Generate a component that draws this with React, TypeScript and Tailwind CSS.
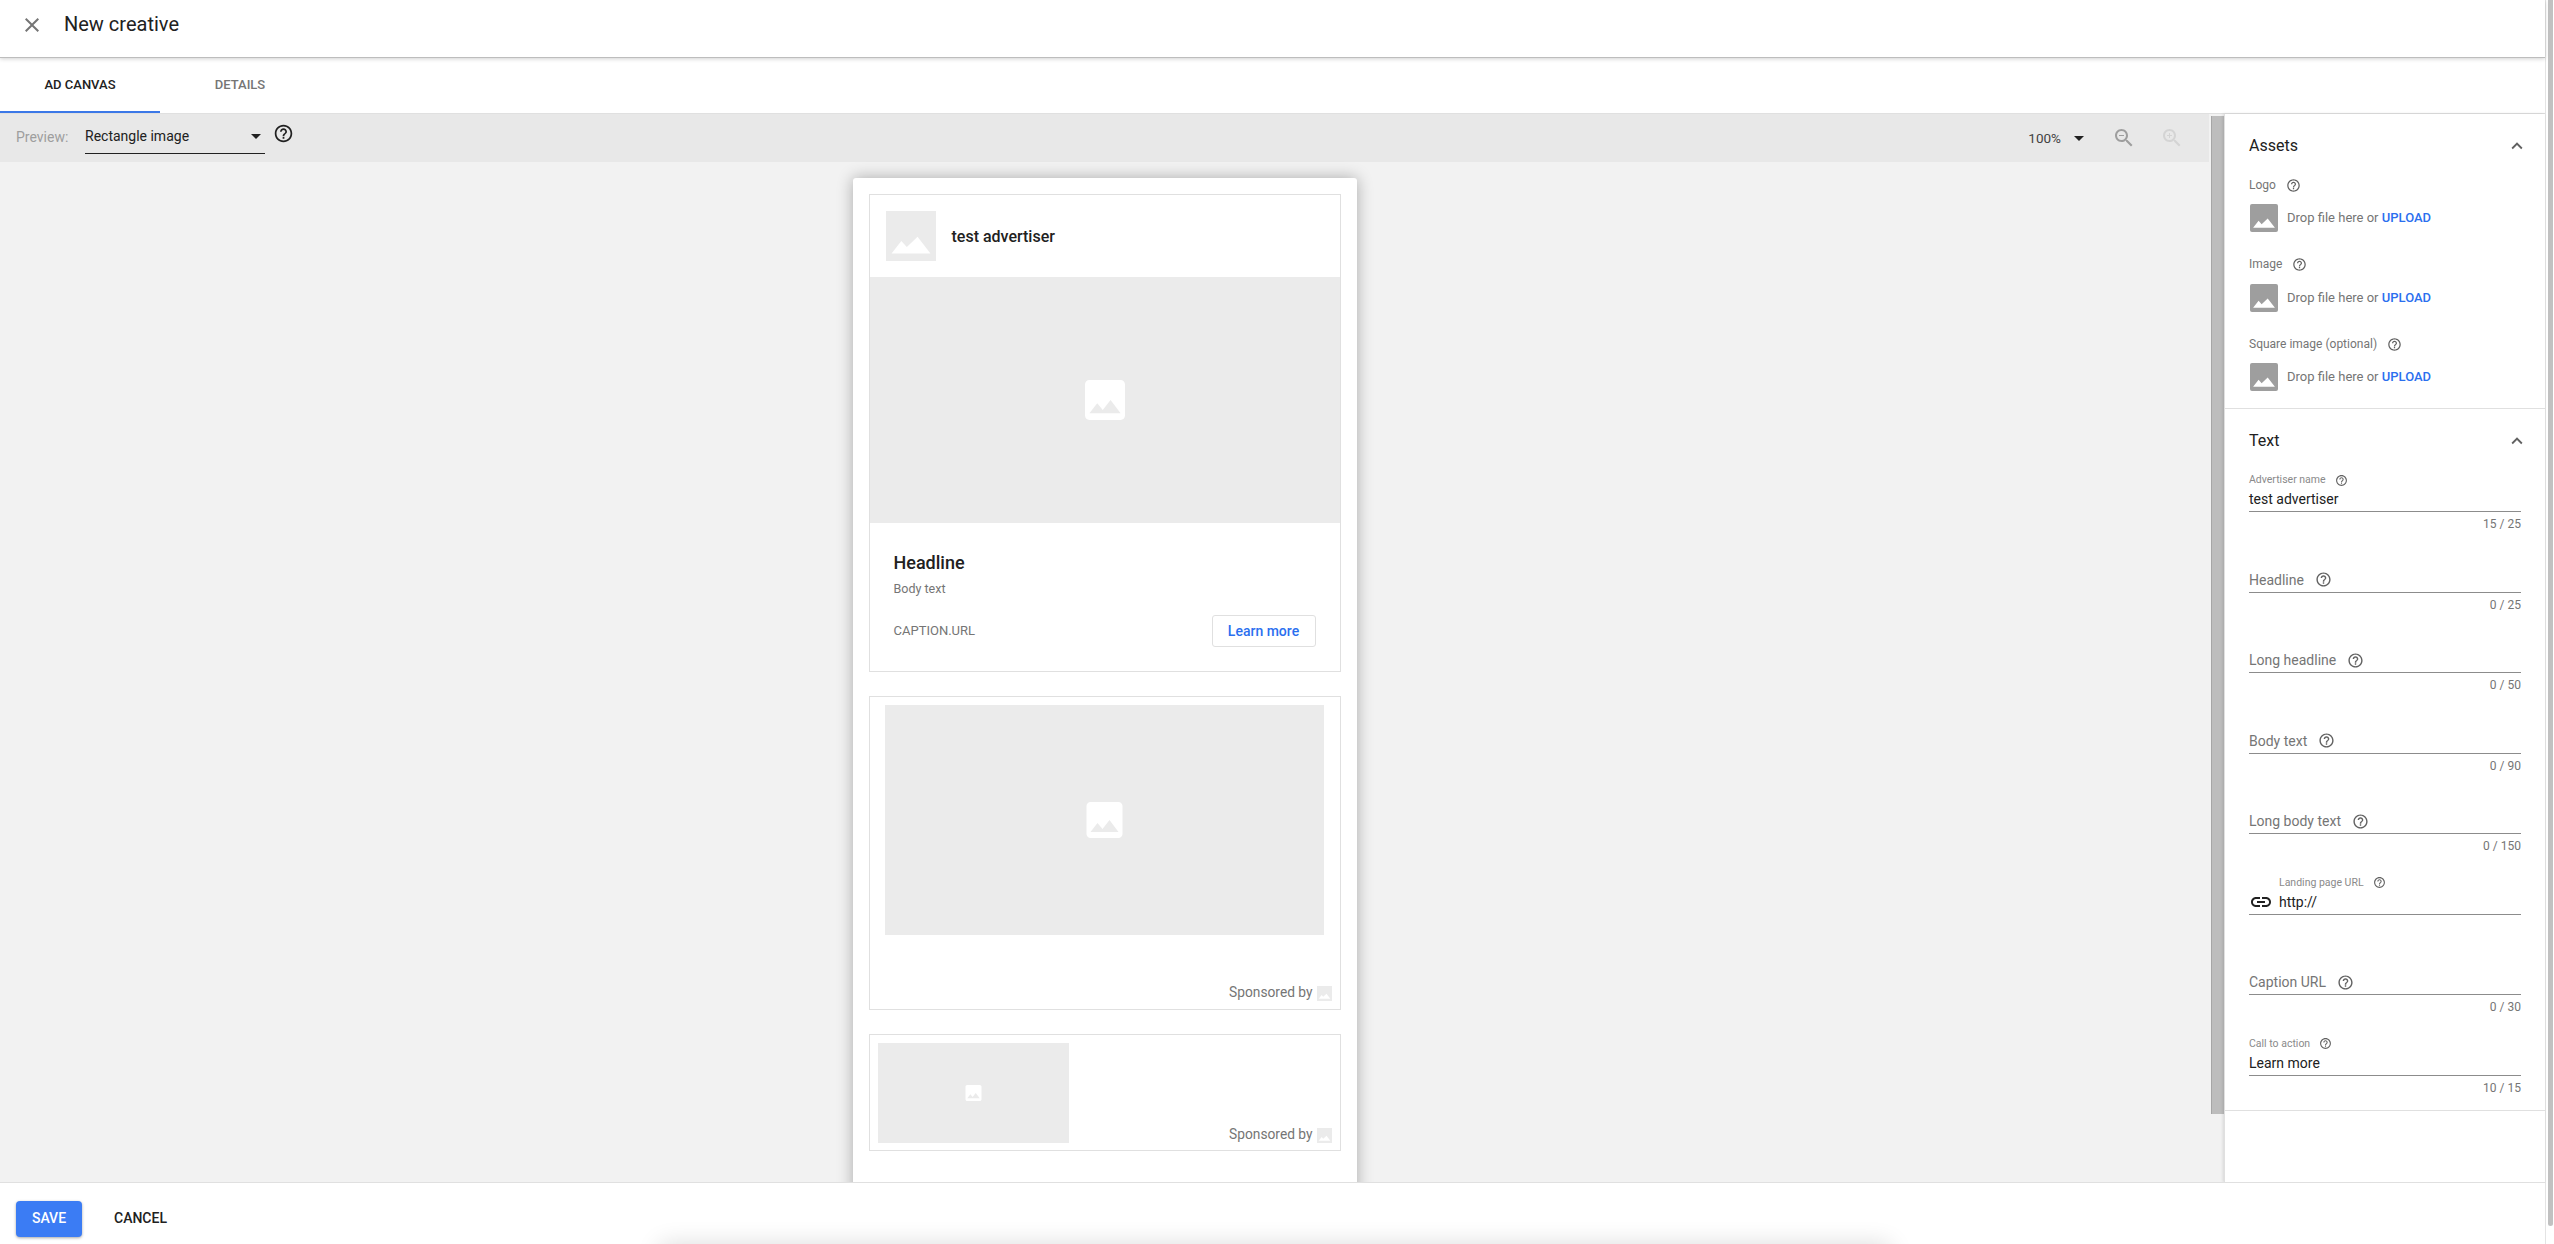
import React from "react";

const HELP = "M11 18h2v-2h-2v2zm1-16C6.48 2 2 6.48 2 12s4.48 10 10 10 10-4.48 10-10S17.52 2 12 2zm0 18c-4.41 0-8-3.59-8-8s3.59-8 8-8 8 3.59 8 8-3.59 8-8 8zm0-14c-2.21 0-4 1.79-4 4h2c0-1.1.9-2 2-2s2 .9 2 2c0 2-3 1.75-3 5h2c0-2.25 3-2.5 3-5 0-2.21-1.79-4-4-4z";
const MOUNTAINS = "M5.3 40.7 14.7 28.7 20 34.5 30.3 24.7 42.7 40.7Z";

function Help({ size, color = "#616161", className = "" }: { size: number; color?: string; className?: string }) {
  return (
    <svg width={size} height={size} viewBox="0 0 24 24" fill={color} className={`shrink-0 ${className}`}>
      <path d={HELP} />
    </svg>
  );
}

function Mountains({ className }: { className: string }) {
  return (
    <svg viewBox="0 0 48 48" fill="#ffffff" className={className}>
      <path d={MOUNTAINS} />
    </svg>
  );
}

function PlaceholderIcon({ w, h }: { w: number; h: number }) {
  return (
    <svg width={w} height={h} viewBox="3 3 18 18" fill="#ffffff">
      <path d="M21 19V5c0-1.1-.9-2-2-2H5c-1.1 0-2 .9-2 2v14c0 1.1.9 2 2 2h14c1.1 0 2-.9 2-2zM8.5 13.5l2.5 3.01L14.5 12l4.5 6H5l3.5-4.5z" />
    </svg>
  );
}

function Sponsored() {
  return (
    <div className="flex items-center justify-end h-[18px] text-[13.75px] leading-[18px] text-[#757575]">
      <span>Sponsored by</span>
      <div className="ml-[4px] mt-[3px] w-[15px] h-[15px] bg-[#ebebeb]">
        <Mountains className="w-[15px] h-[15px]" />
      </div>
    </div>
  );
}

function Caret() {
  return <div className="w-0 h-0 border-l-[5px] border-r-[5px] border-t-[5px] border-l-transparent border-r-transparent border-t-[#212121]" />;
}

function Upload({ label, gapTop, rowTop }: { label: string; gapTop: string; rowTop: string }) {
  return (
    <div>
      <div className={`flex items-center h-[16px] text-[12px] leading-[16px] text-[#757575] ${gapTop}`}>
        <span>{label}</span>
        <Help size={15} className="ml-[10px]" />
      </div>
      <div className={`flex items-center h-[28px] ${rowTop}`}>
        <div className="w-[28px] h-[28px] rounded-[2px] bg-[#9e9e9e] ml-[1px]">
          <Mountains className="w-[28px] h-[28px]" />
        </div>
        <span className="ml-[9px] text-[13px] text-[#757575] whitespace-nowrap">
          Drop file here or <span className="font-medium text-[#2b6fef]">UPLOAD</span>
        </span>
      </div>
    </div>
  );
}

function Field({ label, value, count, indent }: { label: string; value?: string; count?: string; indent?: boolean }) {
  return (
    <div className="h-[80.5px] flex flex-col">
      <div className="flex-1 flex flex-col justify-end border-b border-[#8c8c8c] pb-[2px]">
        {value ? (
          <>
            <div className={`flex items-center h-[14px] mb-[2px] text-[10.5px] leading-[14px] text-[#8a8a8a] ${indent ? "ml-[30px]" : ""}`}>
              <span>{label}</span>
              <Help size={13} className="ml-[9px]" />
            </div>
            <div className="flex items-center h-[20px] text-[14px] leading-[20px] text-[#212121]">
              {indent && (
                <svg width="24" height="24" viewBox="0 0 24 24" fill="#212121" className="mr-[6px] shrink-0">
                  <path d="M3.9 12c0-1.71 1.39-3.1 3.1-3.1h4V7H7c-2.76 0-5 2.24-5 5s2.24 5 5 5h4v-1.9H7c-1.71 0-3.1-1.39-3.1-3.1zM8 13h8v-2H8v2zm9-6h-4v1.9h4c1.71 0 3.1 1.39 3.1 3.1s-1.39 3.1-3.1 3.1h-4V17h4c2.76 0 5-2.24 5-5s-2.24-5-5-5z" />
                </svg>
              )}
              <span>{value}</span>
            </div>
          </>
        ) : (
          <div className="flex items-center h-[20px] text-[14px] leading-[20px] text-[#757575]">
            <span>{label}</span>
            <Help size={17} className="ml-[11px]" />
          </div>
        )}
      </div>
      <div className="h-[23px] pt-[3px] text-right text-[12px] leading-[18px] text-[#757575]">{count}</div>
    </div>
  );
}

function SectionTitle({ title }: { title: string }) {
  return (
    <div className="flex items-center justify-between pt-[22px] h-[42px]">
      <span className="text-[16px] leading-[20px] text-[#212121]">{title}</span>
      <svg width="22" height="22" viewBox="0 0 24 24" fill="#616161" className="-mr-[7px]">
        <path d="M12 8l-6 6 1.41 1.41L12 10.83l4.59 4.58L18 14z" />
      </svg>
    </div>
  );
}

export default function App() {
  return (
    <div className="relative flex h-[1244px] w-full overflow-hidden bg-white font-['Roboto',sans-serif]">
      <div className="flex flex-col w-[2546px] shrink-0 border-r border-[#e4e4e4]">
        <header className="relative z-10 flex items-center h-[58px] shrink-0 bg-white border-b border-[#bdbdbd] shadow-[0_1px_4px_rgba(0,0,0,0.18)]">
          <svg width="24" height="24" viewBox="0 0 24 24" fill="#757575" className="ml-[20px] mb-[8px]">
            <path d="M19 6.41L17.59 5 12 10.59 6.41 5 5 6.41 10.59 12 5 17.59 6.41 19 12 13.41 17.59 19 19 17.59 13.41 12z" />
          </svg>
          <h1 className="ml-[20px] mb-[10px] text-[20px] leading-[24px] font-normal text-[#212121]">New creative</h1>
        </header>

        <nav className="flex h-[56px] shrink-0 bg-white border-b border-[#e0e0e0] text-[13px] font-medium">
          <div className="w-[160px] h-[55px] flex items-center justify-center text-[#212121] border-b-[2px] border-[#3b78e7]">AD CANVAS</div>
          <div className="w-[160px] h-[55px] flex items-center justify-center text-[#757575] border-b-[2px] border-transparent">DETAILS</div>
        </nav>

        <main className="flex flex-1 min-h-0">
          <section className="relative w-[2224px] shrink-0 flex flex-col bg-[#f2f2f2] overflow-hidden">
            <div className="flex items-center w-[2209px] h-[48px] shrink-0 bg-[#e8e8e8] pl-[16px]">
              <span className="w-[53px] text-[14px] whitespace-nowrap text-[#9e9e9e] mb-[1px]">Preview:</span>
              <div className="ml-[16px] w-[180px] h-[40px] self-start flex items-center justify-between border-b border-[#212121] pt-[6px] pr-[4px] text-[14px] text-[#212121]">
                <span>Rectangle image</span>
                <Caret />
              </div>
              <Help size={21} color="#212121" className="ml-[8px] mb-[9px]" />
              <span className="ml-auto text-[13.5px] text-[#424242]">100%</span>
              <div className="ml-[13px]"><Caret /></div>
              <svg width="24" height="24" viewBox="0 0 24 24" fill="#9e9e9e" className="ml-[28px]">
                <path d="M15.5 14h-.79l-.28-.27C15.41 12.59 16 11.11 16 9.5 16 5.91 13.09 3 9.5 3S3 5.91 3 9.5 5.91 16 9.5 16c1.61 0 3.09-.59 4.23-1.57l.27.28v.79l5 4.99L20.49 19l-4.99-5zm-6 0C7.01 14 5 11.99 5 9.5S7.01 5 9.5 5 14 7.01 14 9.5 11.99 14 9.5 14zM7 9h5v1H7z" />
              </svg>
              <svg width="24" height="24" viewBox="0 0 24 24" fill="#d4d4d4" className="ml-[24px] mr-[25px]">
                <path d="M15.5 14h-.79l-.28-.27C15.41 12.59 16 11.11 16 9.5 16 5.91 13.09 3 9.5 3S3 5.91 3 9.5 5.91 16 9.5 16c1.61 0 3.09-.59 4.23-1.57l.27.28v.79l5 4.99L20.49 19l-4.99-5zm-6 0C7.01 14 5 11.99 5 9.5S7.01 5 9.5 5 14 7.01 14 9.5 11.99 14 9.5 14z" />
                <path d="M12 10h-2v2H9v-2H7V9h2V7h1v2h2v1z" />
              </svg>
            </div>

            <div className="flex justify-center w-[2209px] pt-[16px]">
              <div className="w-[504px] shrink-0 bg-white rounded-[3px] shadow-[0_0_16px_rgba(0,0,0,0.3)] px-[16px] pt-[16px] pb-[80px]">
                <div className="h-[478px] border border-[#e0e0e0]">
                  <div className="flex items-center h-[82px] pl-[16px]">
                    <div className="w-[50px] h-[50px] bg-[#ebebeb]">
                      <Mountains className="w-[50px] h-[50px]" />
                    </div>
                    <span className="ml-[16px] mt-[2px] text-[16px] font-medium text-[#212121]">test advertiser</span>
                  </div>
                  <div className="flex items-center justify-center h-[246px] bg-[#ebebeb]">
                    <PlaceholderIcon w={40} h={40} />
                  </div>
                  <div className="pl-[24px] pr-[24px]">
                    <div className="mt-[28px] text-[18px] leading-[24px] font-medium text-[#212121]">Headline</div>
                    <div className="mt-[5px] text-[12.5px] leading-[18px] text-[#757575]">Body text</div>
                    <div className="mt-[17px] flex items-center justify-between">
                      <span className="text-[13px] text-[#757575]">CAPTION.URL</span>
                      <div className="flex items-center justify-center w-[104px] h-[32px] rounded-[3px] border border-[#e0e0e0] text-[14px] font-medium text-[#2b6fef]">Learn more</div>
                    </div>
                  </div>
                </div>

                <div className="mt-[24px] h-[314px] border border-[#e0e0e0]">
                  <div className="ml-[15px] mt-[8px] w-[439px] h-[230px] bg-[#ebebeb] flex items-center justify-center">
                    <PlaceholderIcon w={37} h={36} />
                  </div>
                  <div className="mt-[48px] pr-[8px]">
                    <Sponsored />
                  </div>
                </div>

                <div className="mt-[24px] h-[117px] flex border border-[#e0e0e0]">
                  <div className="ml-[8px] mt-[8px] w-[191px] h-[100px] bg-[#ebebeb] flex items-center justify-center">
                    <PlaceholderIcon w={17} h={16} />
                  </div>
                  <div className="flex-1 flex flex-col justify-end pb-[7px] pr-[8px]">
                    <Sponsored />
                  </div>
                </div>
              </div>
            </div>

            <div className="absolute left-[2211px] top-[2px] w-[13px] h-[998px] bg-[#bdbdbd] border-l border-[#a6a6a6]" />
          </section>

          <aside className="flex-1 flex flex-col bg-white border-l border-[#e0e0e0] shadow-[-1px_0_3px_rgba(0,0,0,0.12)] z-[1]">
            <div className="pl-[24px] pr-[24px] pb-[17px] border-b border-[#e0e0e0]">
              <SectionTitle title="Assets" />
              <Upload label="Logo" gapTop="mt-[21px]" rowTop="mt-[11px]" />
              <Upload label="Image" gapTop="mt-[24px]" rowTop="mt-[12px]" />
              <Upload label="Square image (optional)" gapTop="mt-[24px]" rowTop="mt-[11px]" />
            </div>
            <div className="pl-[24px] pr-[24px] pb-[11px] border-b border-[#e0e0e0]">
              <SectionTitle title="Text" />
              <div className="mt-[3.5px]">
                <Field label="Advertiser name" value="test advertiser" count="15 / 25" />
                <Field label="Headline" count="0 / 25" />
                <Field label="Long headline" count="0 / 50" />
                <Field label="Body text" count="0 / 90" />
                <Field label="Long body text" count="0 / 150" />
                <Field label="Landing page URL" value="http://" indent />
                <Field label="Caption URL" count="0 / 30" />
                <Field label="Call to action" value="Learn more" count="10 / 15" />
              </div>
            </div>
          </aside>
        </main>

        <footer className="relative z-10 flex items-center h-[62px] shrink-0 bg-white border-t border-[#e0e0e0] pl-[16px] pt-[10px] text-[14px] font-medium">
          <div className="flex items-center justify-center w-[66px] h-[36px] rounded-[4px] bg-[#3b7cf4] text-white shadow-[0_1px_3px_rgba(0,0,0,0.35)]">SAVE</div>
          <div className="ml-[32px] text-[#212121]">CANCEL</div>
        </footer>
      </div>

      <div className="ml-[2px] mt-0 w-[5px] h-[1226px] rounded-b-[3px] bg-[#c1c1c1]" />

      <div className="absolute z-20 left-[660px] top-[1244px] w-[1230px] h-[40px] shadow-[0_0_24px_rgba(0,0,0,0.14)]" />
    </div>
  );
}
